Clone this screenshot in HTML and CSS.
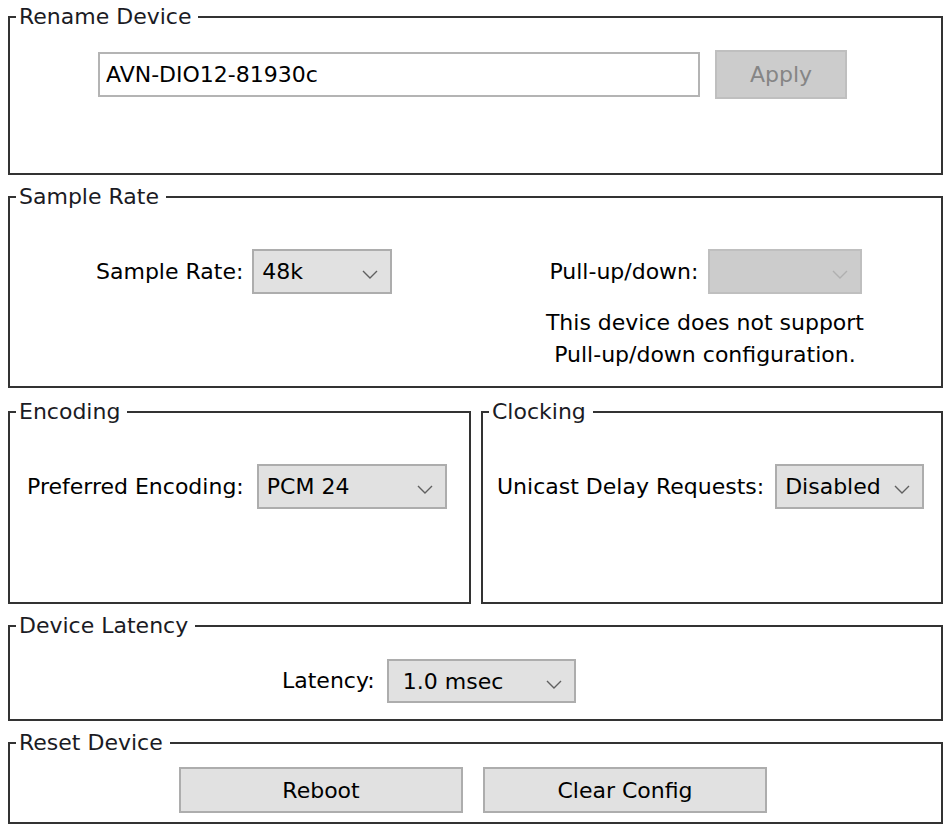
FILE: index.html
```html
<!DOCTYPE html>
<html lang="en">
<head>
<meta charset="utf-8">
<title>Device Settings</title>
<link rel="stylesheet" href="styles.css">
</head>
<body>
<div class="dialog">
  <fieldset class="group g-rename">
    <legend>Rename Device</legend>
    <div class="rename-row">
      <input class="text-input" type="text" value="AVN-DIO12-81930c">
      <button class="btn btn-apply" disabled>Apply</button>
    </div>
  </fieldset>

  <fieldset class="group g-rate">
    <legend>Sample Rate</legend>
    <div class="rate-row">
      <div class="field gap-9">
        <span class="label">Sample Rate:</span>
        <div class="combo w-140">
          <span>48k</span>
          <svg class="chev" viewBox="0 0 16 9" width="16" height="9"><polyline points="1,1 8,8 15,1"/></svg>
        </div>
      </div>
      <div class="pull">
        <div class="field gap-8 pull-field">
          <span class="label">Pull-up/down:</span>
          <div class="combo combo-disabled w-154">
            <span></span>
            <svg class="chev" viewBox="0 0 16 9" width="16" height="9"><polyline points="1,1 8,8 15,1"/></svg>
          </div>
        </div>
        <p class="note">This device does not support<br>Pull-up/down configuration.</p>
      </div>
    </div>
  </fieldset>

  <div class="split-row">
    <fieldset class="group g-half">
      <legend>Encoding</legend>
      <div class="field enc-field">
        <span class="label">Preferred Encoding:</span>
        <div class="combo w-190">
          <span>PCM 24</span>
          <svg class="chev" viewBox="0 0 16 9" width="16" height="9"><polyline points="1,1 8,8 15,1"/></svg>
        </div>
      </div>
    </fieldset>
    <fieldset class="group g-half">
      <legend>Clocking</legend>
      <div class="field clock-field">
        <span class="label">Unicast Delay Requests:</span>
        <div class="combo w-149">
          <span>Disabled</span>
          <svg class="chev" viewBox="0 0 16 9" width="16" height="9"><polyline points="1,1 8,8 15,1"/></svg>
        </div>
      </div>
    </fieldset>
  </div>

  <fieldset class="group g-latency">
    <legend>Device Latency</legend>
    <div class="field latency-field">
      <span class="label">Latency:</span>
      <div class="combo combo-latency w-189">
        <span>1.0 msec</span>
        <svg class="chev" viewBox="0 0 16 9" width="16" height="9"><polyline points="1,1 8,8 15,1"/></svg>
      </div>
    </div>
  </fieldset>

  <fieldset class="group g-reset">
    <legend>Reset Device</legend>
    <div class="reset-row">
      <button class="btn btn-wide">Reboot</button>
      <button class="btn btn-wide">Clear Config</button>
    </div>
  </fieldset>
</div>
</body>
</html>
```

FILE: styles.css
```css
html, body {
  margin: 0;
  padding: 0;
  background: #ffffff;
}

body {
  font-family: "DejaVu Sans", "Noto Sans", sans-serif;
  font-size: 22px;
  color: #000000;
}

.dialog {
  display: flex;
  flex-direction: column;
  gap: 9px;
  padding: 4px 9px 0 8px;
}

.group {
  box-sizing: border-box;
  margin: 0;
  padding: 0;
  min-width: 0;
  border: 2px solid #333333;
}

.group legend {
  margin-left: 6px;
  padding: 0 7px 0 3px;
  line-height: 26px;
  color: #1b1b24;
}

.g-rename { height: 171px; }
.g-rate { height: 204px; }
.g-latency { height: 108px; }
.g-reset { height: 94px; }

.label {
  white-space: nowrap;
  line-height: 26px;
}

/* Rename */
.rename-row {
  display: flex;
  align-items: center;
  gap: 15px;
  padding-left: 88px;
  margin-top: 20px;
}

.text-input {
  box-sizing: border-box;
  width: 602px;
  height: 45px;
  margin: 0;
  padding: 0 6px;
  border: 2px solid #b4b4b4;
  background: #ffffff;
  font: inherit;
  color: #000000;
  outline: none;
}

.btn {
  box-sizing: border-box;
  margin: 0;
  padding: 0;
  border: 2px solid #adadad;
  background: #e1e1e1;
  font: inherit;
  color: #000000;
  text-align: center;
}

.btn-apply {
  width: 132px;
  height: 49px;
  background: #cccccc;
  border-color: #bfbfbf;
  color: #858585;
}

/* Fields and combos */
.field {
  display: flex;
  align-items: center;
}

.gap-9 { gap: 9px; }
.gap-8 { gap: 8px; }

.combo {
  box-sizing: border-box;
  height: 45px;
  display: flex;
  align-items: center;
  justify-content: space-between;
  padding: 0 12px 0 8px;
  border: 2px solid #adadad;
  background: #e1e1e1;
  white-space: nowrap;
}

.combo .chev {
  flex: none;
  margin-top: 6px;
  fill: none;
  stroke: #606060;
  stroke-width: 1.4;
}

.combo-disabled {
  background: #cccccc;
  border-color: #bfbfbf;
}

.combo-disabled .chev {
  stroke: #b0b0b0;
}

.combo-latency {
  height: 44px;
  padding-left: 14px;
}

.w-140 { width: 140px; }
.w-154 { width: 154px; }
.w-190 { width: 190px; }
.w-149 { width: 149px; }
.w-189 { width: 189px; }

/* Sample rate */
.rate-row {
  display: flex;
  justify-content: space-between;
  align-items: flex-start;
  padding: 0 77px 0 86px;
  margin-top: 39px;
}

.pull {
  display: flex;
  flex-direction: column;
  align-items: center;
}

.pull-field {
  gap: 10px;
  margin-left: 2px;
}

.note {
  margin: 13px 0 0;
  text-align: center;
  line-height: 32px;
}

/* Encoding / Clocking */
.split-row {
  display: grid;
  grid-template-columns: 463px 462px;
  gap: 10px;
  height: 205px;
  margin-top: 2px;
}

.g-half {
  height: 100%;
}

.enc-field {
  gap: 13px;
  padding-left: 17px;
  margin-top: 39px;
}

.clock-field {
  gap: 11px;
  padding-left: 14px;
  margin-top: 39px;
}

/* Latency */
.latency-field {
  gap: 12px;
  padding-left: 272px;
  margin-top: 20px;
}

/* Reset */
.reset-row {
  display: flex;
  gap: 20px;
  padding-left: 169px;
  margin-top: 11px;
}

.btn-wide {
  width: 284px;
  height: 46px;
}
```
